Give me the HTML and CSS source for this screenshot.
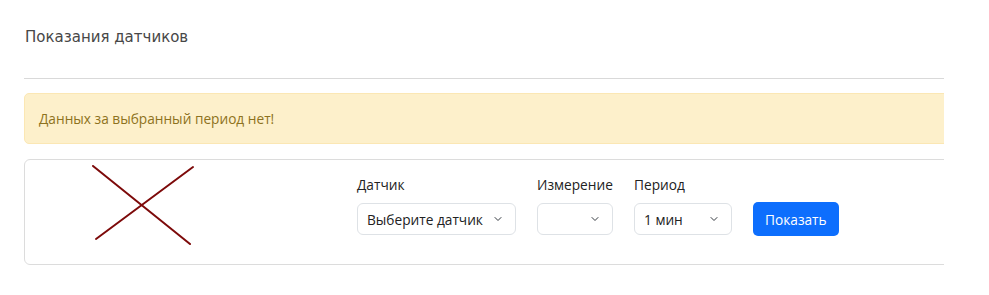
FILE: index.html
```html
<!DOCTYPE html>
<html lang="ru">

<head>
  <meta charset="UTF-8">
  <title>Показания датчиков</title>
  <link rel="stylesheet" href="styles.css">
</head>

<body>
  <div class="page">
    <h1 class="page-title">Показания датчиков</h1>
    <hr class="divider">

    <div class="alert">Данных за выбранный период нет!</div>

    <div class="card">
      <div class="pic">
        <svg width="104" height="82" viewBox="0 0 104 82">
          <line x1="1" y1="1" x2="98" y2="79" stroke="#7d0a0a" stroke-width="2" stroke-linecap="round" />
          <line x1="101" y1="2" x2="4" y2="74" stroke="#7d0a0a" stroke-width="2" stroke-linecap="round" />
        </svg>
      </div>

      <form class="filters">
        <div class="field">
          <label for="sensor">Датчик</label>
          <select id="sensor" class="select sensor">
            <option>Выберите датчик</option>
          </select>
        </div>
        <div class="field">
          <label for="measure">Измерение</label>
          <select id="measure" class="select measure">
            <option></option>
          </select>
        </div>
        <div class="field">
          <label for="period">Период</label>
          <select id="period" class="select period">
            <option>1 мин</option>
          </select>
        </div>
        <button type="button" class="btn">Показать</button>
      </form>
    </div>
  </div>
</body>

</html>
```

FILE: styles.css
```css
* {
  margin: 0;
  padding: 0;
  box-sizing: border-box;
}

body {
  font-family: 'Open Sans', 'Noto Sans', sans-serif;
  color: #212529;
  background: #fff;
}

/* page is cut off on the right, like the original */
.page {
  margin-left: 24px;
  width: 920px;
  overflow: hidden;
  padding-top: 27px;
}

.page-title {
  font-family: 'DejaVu Sans', sans-serif;
  font-size: 15px;
  font-weight: 400;
  line-height: 20px;
  color: #474747;
  padding-left: 1px;
}

.divider {
  width: 940px;
  border: 0;
  border-top: 1px solid #d9d9d9;
  margin-top: 31px;
}

.alert {
  width: 940px;
  margin-top: 14px;
  height: 51px;
  padding: 0 14px;
  display: flex;
  align-items: center;
  background-color: #fdf0cb;
  border: 1px solid #fbe7b4;
  border-radius: 5px;
  color: #8d7220;
  font-size: 13.7px;
}

.card {
  width: 940px;
  margin-top: 15px;
  height: 106px;
  display: flex;
  align-items: flex-start;
  border: 1px solid #dcdcdc;
  border-radius: 6px;
}

.pic {
  width: 332px;
  padding-left: 67px;
  padding-top: 5px;
}

.filters {
  display: flex;
  align-items: flex-end;
  gap: 21px;
  padding-top: 16px;
}

.field label {
  display: block;
  font-size: 13.7px;
  line-height: 18px;
  color: #222;
  margin-bottom: 9px;
}

.select {
  appearance: none;
  height: 32px;
  border: 1px solid #dee2e6;
  border-radius: 6px;
  background-color: #fff;
  background-image: url("data:image/svg+xml,%3csvg xmlns='http://www.w3.org/2000/svg' viewBox='0 0 16 16'%3e%3cpath fill='none' stroke='%23343a40' stroke-linecap='round' stroke-linejoin='round' stroke-width='2' d='m2 5 6 6 6-6'/%3e%3c/svg%3e");
  background-repeat: no-repeat;
  background-position: right 13px center;
  background-size: 8px 8px;
  font-family: inherit;
  font-size: 13.7px;
  color: #222;
  padding: 0 30px 0 9px;
}

.sensor {
  width: 159px;
}

.measure {
  width: 76px;
}

.period {
  width: 98px;
}

.btn {
  height: 34px;
  margin-bottom: -1px;
  padding: 0 12px;
  border: none;
  border-radius: 5px;
  background-color: #0d6efd;
  color: #fff;
  font-family: inherit;
  font-size: 13.7px;
  cursor: pointer;
}
```
